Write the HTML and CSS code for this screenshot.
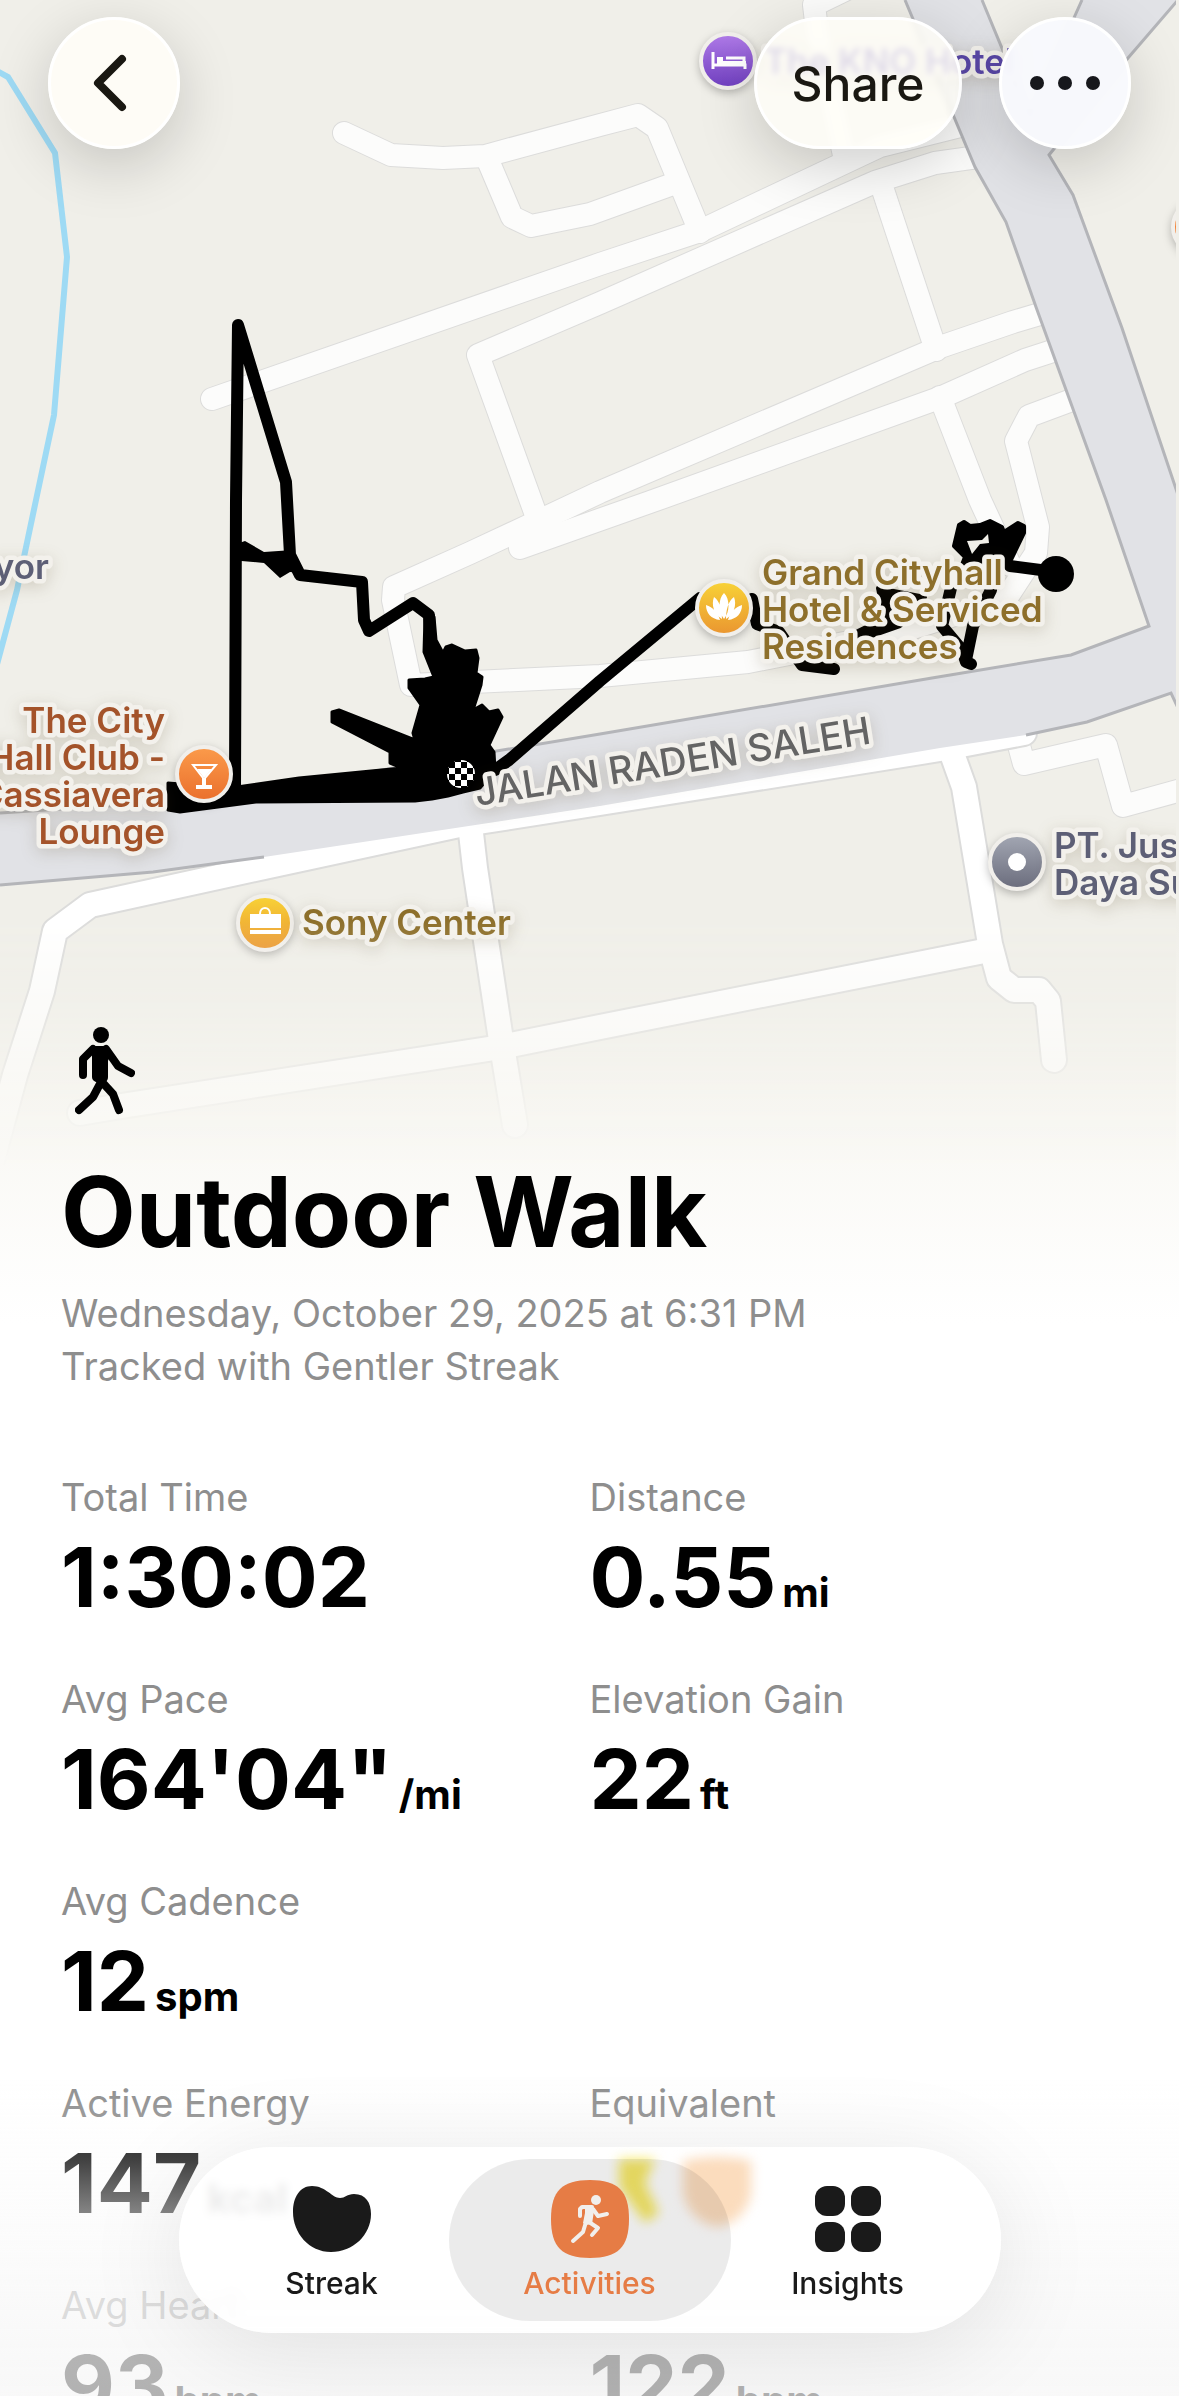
FILE: index.html
```html
<!DOCTYPE html>
<html lang="en">
<head>
  <meta charset="UTF-8">
  <meta name="viewport" content="width=device-width, initial-scale=1.0">
  <title>Outdoor Walk</title>
  <link rel="stylesheet" href="styles.css">
</head>
<body>

  <main class="screen">

    <section class="hero">
      <div class="map">
        <svg class="map-svg" viewBox="0 0 1176 1393" preserveAspectRatio="xMinYMin slice" role="img" aria-label="Route map">
          <defs>
            <linearGradient id="orange" x1="0" y1="0" x2="0" y2="1"><stop offset="0" stop-color="#fb9b4b"/><stop offset="1" stop-color="#ea6f2c"/></linearGradient>
            <linearGradient id="yellow" x1="0" y1="0" x2="0" y2="1"><stop offset="0" stop-color="#f8d337"/><stop offset="1" stop-color="#ea9530"/></linearGradient>
            <linearGradient id="purple" x1="0" y1="0" x2="0" y2="1"><stop offset="0" stop-color="#b07be8"/><stop offset="1" stop-color="#6f3fc0"/></linearGradient>
            <linearGradient id="grey" x1="0" y1="0" x2="0" y2="1"><stop offset="0" stop-color="#a3a7b3"/><stop offset="1" stop-color="#6a6c7c"/></linearGradient>
            <pattern id="checks" width="12" height="12" patternUnits="userSpaceOnUse" x="455" y="768">
              <rect width="12" height="12" fill="#fff"/><rect width="6" height="6"/><rect x="6" y="6" width="6" height="6"/>
            </pattern>
            <!-- small streets, drawn twice: edge then surface -->
            <g id="streets">
              <path d="M344 133 391 155 443 158 485 156 600 125 638 115 657 128 700 232"/>
              <path d="M487 158 512 217 531 226 590 214 673 184"/>
              <path d="M212 399 600 264 700 231 844 163 880 146 960 126"/>
              <path d="M845 -10 814 5 817 30 845 160"/>
              <path d="M540 526 478 355 600 303 875 182 935 163 985 156"/>
              <path d="M882 187 936 350"/>
              <path d="M1050 311 1013 322 940 347 600 492 530 525 470 553 394 587 393 600 411 685 600 676 748 662 900 632 1006 599 1036 553 1038 527 1016 441 1029 416 1080 397"/>
              <path d="M1065 347 1025 360 942 397 650 502 520 548"/>
              <path d="M940 397 980 500 1010 565"/>
              <path d="M1017 738 1024 764 1106 745 1123 806 1185 789"/>
            </g>
            <g id="avenues">
              <path d="M-8 1160 15 1075 42 991 55 931 90 905 264 867 459 825 600 803 940 749 1024 733"/>
              <path d="M471 833 475 868 501 1040 515 1125"/>
              <path d="M80 1113 115 1107 501 1047 600 1027 984 951"/>
              <path d="M950 748 964 787 990 944 999 978 1014 990 1039 990 1048 1001 1054 1060"/>
            </g>
          </defs>

          <rect width="1176" height="1393" fill="#f0efe9"/>
          <path d="M-5 70 8 77 55 153 67 257 54 415 36 500 17 590 -4 668" fill="none" stroke="#9edaf4" stroke-width="6"/>

          <use href="#streets" class="edge edge-small"/>
          <use href="#streets" class="road road-small"/>
          <use href="#avenues" class="edge edge-wide"/>
          <use href="#avenues" class="road road-wide"/>

          <!-- main roads -->
          <path d="M905 0H982L1030 116 1082 0H1178L1128 58 1049 155 1073 195 1122 328 1178 495V708L1171 693 1087 722 1026 735 940 748 600 806 264 857 153 872 0 885V813L200 800 600 734 932 678 1071 655 1149 626 1106 500 1036 307 1006 222 975 167Z" fill="#e1e2e6"/>
          <path d="M0 813 200 800 600 734 932 678 1071 655 1149 626 1106 500 1036 307 1006 222 975 167 905 0M982 0 1030 116 1082 0M1178 0 1128 58 1049 155 1073 195 1122 328 1178 495M1178 708 1171 693 1087 722 1026 735M264 857 153 872 0 885" fill="none" stroke="#b4b5b9" stroke-width="3"/>

          <!-- recorded route -->
          <g fill="none" stroke="#000" stroke-width="12" stroke-linecap="round" stroke-linejoin="round">
            <path d="M235 787 236 500 238 325 286 482 290 555 300 575 362 582 364 620 369 631 413 603 429 615 431 650"/>
            <path d="M495 770 509 760 600 681 700 598"/>
            <path d="M752 599 757 624 779 632 802 665 834 669M951 588 942 626 962 650 966 662 971 664M991 590 973 626 966 660"/>
            <path d="M1010 566 1056 572"/>
          </g>
          <path d="M878 588 925 597 918 610 900 626 860 640 856 632 884 618Z" stroke="#000" stroke-width="4" stroke-linejoin="round"/>
          <path d="M230 546 245 541 264 552 293 550 304 573 290 572 280 578 264 563 230 560Z"/>
          <path d="M434 617 436 640 443 653 446 647 452 645 465 651 476 650 478 658 476 673 482 677 481 685 473 710 482 705 489 712 498 710 502 717 489 745 494 752 495 770 480 788 463 792 448 796 432 799 415 801 256 802 180 812 168 810 168 783 230 788 299 778 402 768 390 763 390 752 332 722 332 712 339 710 415 740 413 733 421 705 409 688 409 680 425 679 434 677 424 652 425 617Z" stroke="#000" stroke-width="3" stroke-linejoin="round"/>
          <path d="M959 525 964 522 970 526 980 525 990 521 1002 527 1004 532 1018 523 1024 526 1024 533 1008 566 960 570 965 557 954 546Z" stroke="#000" stroke-linejoin="round" stroke-width="4"/>
          <path d="M967 541 982 540 988 534 989 543 980 544 972 554Z" fill="#f0efe9"/>
          <circle cx="1056" cy="574" r="18"/>
          <circle cx="461" cy="774" r="15" fill="url(#checks)" stroke="#000" stroke-width="2"/>

          <!-- places -->
          <g class="pin"><circle cx="728" cy="61" r="27" fill="url(#purple)"/>
            <path d="M713 52v17M713 65h32v4M726 58h18v3" fill="none" stroke="#fff" stroke-width="3"/><path class="glyph" d="M717 57h6v4h-6ZM717 61h29v3h-29Z"/></g>
          <g class="pin"><circle cx="1200" cy="227" r="27" fill="url(#orange)"/></g>
          <g class="pin"><circle cx="724" cy="608" r="27" fill="url(#yellow)"/>
            <path class="glyph" d="M724 593c6 6 6 19 0 26-6-7-6-20 0-26ZM714 597c6 4 8 14 8 22-8-5-11-14-8-22ZM734 597c-6 4-8 14-8 22 8-5 11-14 8-22ZM706 605c7 2 12 8 14 15-9-1-14-7-14-15ZM742 605c-7 2-12 8-14 15 9-1 14-7 14-15Z"/></g>
          <g class="pin"><circle cx="204" cy="774" r="27" fill="url(#orange)"/>
            <path d="M193 765h23l-11 13v8h6v2h-14v-2h6v-8Z" fill="none" stroke="#fff" stroke-width="2"/><path class="glyph" d="M197 769h15l-8 9Z"/></g>
          <g class="pin"><circle cx="265" cy="923" r="27" fill="url(#yellow)"/>
            <path class="glyph" d="M250 914h31v14h-31ZM250 930h31v4h-31Z"/><path d="M260 914c0-8 10-8 10 0" fill="none" stroke="#fff" stroke-width="2"/></g>
          <g class="pin"><circle cx="1017" cy="862" r="27" fill="url(#grey)"/><circle class="glyph" cx="1017" cy="862" r="9"/></g>

          <g class="place">
            <text class="hotel" x="764" y="74">The KNO Hotel</text>
            <text class="slate" x="49" y="579" text-anchor="end">yor</text>
            <text class="lounge" text-anchor="end"><tspan x="165" y="733">The City</tspan><tspan x="165" y="770">Hall Club -</tspan><tspan x="165" y="807">Cassiavera</tspan><tspan x="165" y="844">Lounge</tspan></text>
            <text class="gold" x="302" y="935">Sony Center</text>
            <text class="gold"><tspan x="762" y="585">Grand Cityhall</tspan><tspan x="762" y="622">Hotel &amp; Serviced</tspan><tspan x="762" y="659">Residences</tspan></text>
            <text class="slate"><tspan x="1054" y="858">PT. Jus</tspan><tspan x="1054" y="895">Daya Su</tspan></text>
            <text class="street" transform="translate(477 806) rotate(-9)">JALAN RADEN SALEH</text>
          </g>
        </svg>
      </div>

      <header class="summary">
        <svg class="walker" viewBox="0 0 60 88" aria-hidden="true">
          <circle cx="26" cy="8" r="8"/>
          <path d="M17 19h14l5 6-3 9v16c0 4-3 6-7 6s-9-2-9-6Z"/>
          <path d="M18 22 8 32v16M31 22l12 17 13 7M26 55l-8 15L4 83M27 55l11 12 6 16" fill="none" stroke="#000" stroke-width="8" stroke-linecap="round" stroke-linejoin="round"/>
        </svg>
        <h1>Outdoor Walk</h1>
        <p>Wednesday, October 29, 2025 at 6:31 PM<br>Tracked with Gentler Streak</p>
      </header>
    </section>

    <dl class="stats">
      <div class="stat">
        <dt>Total Time</dt>
        <dd>1:30:02</dd>
      </div>
      <div class="stat">
        <dt>Distance</dt>
        <dd>0.55<span class="unit">mi</span></dd>
      </div>
      <div class="stat">
        <dt>Avg Pace</dt>
        <dd>164'04"<span class="unit">/mi</span></dd>
      </div>
      <div class="stat">
        <dt>Elevation Gain</dt>
        <dd>22<span class="unit">ft</span></dd>
      </div>
      <div class="stat wide">
        <dt>Avg Cadence</dt>
        <dd>12<span class="unit">spm</span></dd>
      </div>
      <div class="stat">
        <dt>Active Energy</dt>
        <dd>147<span class="unit">kcal</span></dd>
      </div>
      <div class="stat">
        <dt>Equivalent</dt>
        <dd></dd>
      </div>
      <div class="stat">
        <dt>Avg Heart</dt>
        <dd>93<span class="unit">bpm</span></dd>
      </div>
      <div class="stat">
        <dt></dt>
        <dd>122<span class="unit">bpm</span></dd>
      </div>
    </dl>
  </main>

  <div class="toolbar">
    <button class="glass round" type="button" aria-label="Back">
      <svg width="44" height="66" viewBox="0 0 44 66" aria-hidden="true"><path d="M30 9 6 33l24 24" fill="none" stroke="#1a1812" stroke-width="8" stroke-linecap="round" stroke-linejoin="round"/></svg>
    </button>
    <div class="actions">
      <button class="glass share" type="button">Share</button>
      <button class="glass round more" type="button" aria-label="More">
        <svg width="72" height="16" viewBox="0 0 72 16" fill="#17181c" aria-hidden="true"><circle cx="8" cy="8" r="7"/><circle cx="36" cy="8" r="7"/><circle cx="64" cy="8" r="7"/></svg>
      </button>
    </div>
  </div>

  <div class="fade"></div>

  <nav class="tabbar">
    <svg class="glow" width="150" height="84" viewBox="0 0 150 84" aria-hidden="true">
      <path d="M6 6h36L32 30l14 30-14 10-26-36Z" fill="#f7e968"/>
      <path d="M70 8q34-8 68 0v34q-8 28-34 32-28-6-34-34Z" fill="#fbdcbd"/>
    </svg>
    <a class="tab" href="#streak">
      <svg width="78" height="78" viewBox="0 0 78 78" aria-hidden="true"><path d="M19 6c14 0 20 12 28 12 5 0 7-4 14-4 12 0 17 9 17 20 0 21-18 38-40 38C16 72 0 53 0 32 0 17 7 6 19 6Z"/></svg>
      <span>Streak</span>
    </a>
    <a class="tab active" href="#activities" aria-current="page">
      <svg width="78" height="78" viewBox="0 0 78 78" aria-hidden="true">
        <path d="M39 0c28 0 39 11 39 39S67 78 39 78 0 67 0 39 11 0 39 0Z"/>
        <circle cx="45" cy="20" r="5" fill="#f1efec"/>
        <path d="M34 27h8l1 4-2 13-6 1-3-2 2-10Z" fill="#f1efec"/>
        <path d="M41 27H31l-2 2v7M42 29l5 7 9-2M35 42l-3 10-10 9M38 42l9 6-6 7" fill="none" stroke="#f1efec" stroke-width="4" stroke-linecap="round" stroke-linejoin="round"/>
      </svg>
      <span>Activities</span>
    </a>
    <a class="tab" href="#insights">
      <svg width="78" height="78" viewBox="0 0 78 78" aria-hidden="true"><rect x="6" y="6" width="30" height="30" rx="12"/><rect x="42" y="6" width="30" height="30" rx="12"/><rect x="6" y="42" width="30" height="30" rx="12"/><rect x="42" y="42" width="30" height="30" rx="12"/></svg>
      <span>Insights</span>
    </a>
  </nav>

</body>
</html>
```

FILE: styles.css
```css
* {
  box-sizing: border-box;
}

body {
  margin: 0;
  font-family: "Inter", "Liberation Sans", sans-serif;
  background-color: #fff;
  color: #000;
}

.screen {
  height: 100vh;
  overflow-y: auto;
  scrollbar-width: none;
}

/* map and title */
.hero {
  display: grid;
}

.map,
.summary {
  grid-area: 1 / 1;
}

.map {
  aspect-ratio: 1179 / 1393;
  padding-right: 3px;
  background: linear-gradient(#f0efe9 66%, #f8f7f2 78%, #fff 95%);
}

/* streets vanish before the cream background does */
.map-svg {
  display: block;
  width: 100%;
  height: 100%;
  -webkit-mask-image: linear-gradient(#000 66%, rgba(0, 0, 0, 0.6) 73%, rgba(0, 0, 0, 0.2) 79%, transparent 84%);
  mask-image: linear-gradient(#000 66%, rgba(0, 0, 0, 0.6) 73%, rgba(0, 0, 0, 0.2) 79%, transparent 84%);
}

.edge,
.road {
  fill: none;
  stroke-linecap: round;
  stroke-linejoin: round;
}

.edge {
  stroke: #dcdcdb;
}

.edge-small {
  stroke-width: 24px;
}

.edge-wide {
  stroke-width: 28px;
}

.road {
  stroke: #fcfcfb;
}

.road-small {
  stroke-width: 22px;
}

.road-wide {
  stroke: #fff;
  stroke-width: 24px;
}

.pin circle:first-child {
  stroke: #f1efeb;
  stroke-width: 4px;
  filter: drop-shadow(0 3px 4px rgba(0, 0, 0, 0.25));
}

.glyph {
  fill: #fff;
}

.place {
  font-size: 35px;
  font-weight: 600;
  paint-order: stroke;
  stroke: #f3f1ec;
  stroke-width: 9px;
  stroke-linejoin: round;
  filter: drop-shadow(0 4px 8px rgba(80, 60, 20, 0.18));
}

.hotel {
  fill: #5a48a8;
}

.slate {
  fill: #5d5f76;
}

.lounge {
  fill: #a4532a;
}

.gold {
  fill: #8d6f2b;
}

.street {
  font-size: 38px;
  font-weight: 500;
  fill: #646464;
}

.summary {
  z-index: 1;
  align-self: end;
  padding: 0 61px;
}

.walker {
  display: block;
  width: 60px;
  height: 88px;
  margin: 0 14px 42px;
}

h1 {
  margin: 0 0 20px;
  font-size: 97px;
  line-height: 110px;
  font-weight: 700;
}

.summary p {
  margin: 0;
  font-size: 38px;
  line-height: 53px;
  color: #8e8e8e;
}

/* numbers */
.stats {
  display: grid;
  grid-template-columns: 1fr 1fr;
  row-gap: 51px;
  margin: 0;
  padding: 81px 61px 300px;
}

.wide {
  grid-column: span 2;
}

dt {
  height: 46px;
  margin-bottom: 9px;
  font-size: 38px;
  line-height: 46px;
  color: #8e8e8e;
}

dd {
  height: 96px;
  margin: 0;
  font-size: 83px;
  line-height: 96px;
  font-weight: 700;
}

.unit {
  margin-left: 6px;
  font-size: 40px;
}

/* floating buttons */
.toolbar {
  position: fixed;
  top: 17px;
  left: 48px;
  right: 48px;
  display: flex;
  justify-content: space-between;
}

.actions {
  display: flex;
  gap: 37px;
}

.glass {
  display: flex;
  align-items: center;
  justify-content: center;
  height: 132px;
  padding: 0;
  border: 3px solid #fff;
  border-radius: 66px;
  background-color: rgba(255, 253, 246, 0.93);
  backdrop-filter: blur(3px);
  box-shadow: 0 16px 60px rgba(0, 0, 0, 0.18);
  font-family: inherit;
  color: #1a1812;
  cursor: pointer;
}

.round {
  width: 132px;
}

.share {
  width: 208px;
  background-color: rgba(255, 254, 248, 0.8);
  font-size: 48px;
  font-weight: 500;
}

.more {
  background-color: rgba(248, 249, 253, 0.96);
}

/* bottom bar */
.fade {
  position: fixed;
  left: 0;
  right: 0;
  bottom: 0;
  height: 320px;
  background: linear-gradient(rgba(252, 252, 252, 0), rgba(250, 250, 250, 0.26) 26%, rgba(250, 250, 250, 0.55) 44%, rgba(248, 248, 248, 0.74) 70%, rgba(246, 246, 246, 0.72));
  pointer-events: none;
}

.tabbar {
  position: fixed;
  left: 50%;
  bottom: 63px;
  display: flex;
  padding: 12px;
  border-radius: 93px;
  background-color: rgba(255, 255, 255, 0.86);
  backdrop-filter: blur(4px);
  box-shadow: 0 16px 100px rgba(0, 0, 0, 0.1);
  transform: translateX(-50%);
}

.glow {
  position: absolute;
  top: 6px;
  left: 434px;
  filter: blur(6px);
}

.tab {
  position: relative;
  display: flex;
  flex-direction: column;
  align-items: center;
  gap: 6px;
  width: 282px;
  height: 162px;
  padding-top: 21px;
  border-radius: 81px;
  font-size: 30px;
  line-height: 38px;
  font-weight: 500;
  color: #1a1a1a;
  fill: #1a1a1a;
  text-decoration: none;
}

.tab + .tab {
  margin-left: -24px;
}

.active {
  background-color: rgba(0, 0, 0, 0.08);
  color: #e67c45;
  fill: #e67c45;
}
```
